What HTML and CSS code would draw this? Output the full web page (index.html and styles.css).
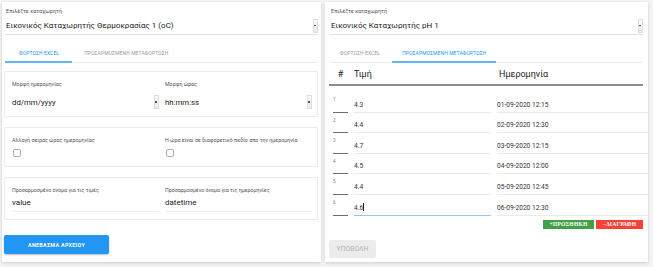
FILE: index.html
```html
<!DOCTYPE html>
<html lang="el">
<head>
    <meta charset="UTF-8">
    <meta name="viewport" content="width=device-width, initial-scale=1.0">
    <title>Μεταφόρτωση μετρήσεων</title>
    <link rel="stylesheet" href="styles.css">
</head>
<body>
<div class="page">

    <div class="card card-left">
        <div class="sel-label">Επιλέξτε καταχωρητή</div>
        <div class="select big">
            <span>Εικονικός Καταχωρητής Θερμοκρασίας 1 (oC)</span>
            <i class="arrow"></i>
        </div>

        <div class="tabs">
            <div class="tab active">ΦΟΡΤΩΣΗ EXCEL</div>
            <div class="tab">ΠΡΟΣΑΡΜΟΣΜΕΝΗ ΜΕΤΑΦΟΡΤΩΣΗ</div>
        </div>

        <div class="box box-formats">
            <div class="field">
                <div class="f-label">Μορφή ημερομηνίας</div>
                <div class="select small"><span>dd/mm/yyyy</span><i class="arrow"></i></div>
            </div>
            <div class="field">
                <div class="f-label">Μορφή ώρας</div>
                <div class="select small"><span>hh:mm:ss</span><i class="arrow"></i></div>
            </div>
        </div>

        <div class="box box-checks">
            <div class="field">
                <div class="f-label">Αλλαγή σειράς ώρας ημερομηνίας</div>
                <span class="check"></span>
            </div>
            <div class="field">
                <div class="f-label">Η ώρα είναι σε διαφορετικό πεδίο απο την ημερομηνία</div>
                <span class="check"></span>
            </div>
        </div>

        <div class="box box-names">
            <div class="field">
                <div class="f-label">Προσαρμοσμένο όνομα για τις τιμές</div>
                <div class="text-input">value</div>
            </div>
            <div class="field">
                <div class="f-label">Προσαρμοσμένο όνομα για τις ημερομηνίες</div>
                <div class="text-input">datetime</div>
            </div>
        </div>

        <button class="btn-upload">ΑΝΕΒΑΣΜΑ ΑΡΧΕΙΟΥ</button>
    </div>

    <div class="card card-right">
        <div class="sel-label">Επιλέξτε καταχωρητή</div>
        <div class="select big">
            <span>Εικονικός Καταχωρητής pH 1</span>
            <i class="arrow"></i>
        </div>

        <div class="tabs">
            <div class="tab">ΦΟΡΤΩΣΗ EXCEL</div>
            <div class="tab active">ΠΡΟΣΑΡΜΟΣΜΕΝΗ ΜΕΤΑΦΟΡΤΩΣΗ</div>
        </div>

        <div class="table">
            <div class="thead">
                <div class="c-num">#</div>
                <div class="c-val">Τιμή</div>
                <div class="c-date">Ημερομηνία</div>
            </div>
            <div class="row">
                <div class="c-num">1</div>
                <div class="c-val cell">4.3</div>
                <div class="c-date cell">01-09-2020 12:15</div>
            </div>
            <div class="row">
                <div class="c-num">2</div>
                <div class="c-val cell">4.4</div>
                <div class="c-date cell">02-09-2020 12:30</div>
            </div>
            <div class="row">
                <div class="c-num">3</div>
                <div class="c-val cell">4.7</div>
                <div class="c-date cell">03-09-2020 12:15</div>
            </div>
            <div class="row">
                <div class="c-num">4</div>
                <div class="c-val cell">4.5</div>
                <div class="c-date cell">04-09-2020 12:00</div>
            </div>
            <div class="row">
                <div class="c-num">5</div>
                <div class="c-val cell">4.4</div>
                <div class="c-date cell">05-09-2020 12:45</div>
            </div>
            <div class="row">
                <div class="c-num">6</div>
                <div class="c-val cell focused">4.6<span class="caret"></span></div>
                <div class="c-date cell">06-09-2020 12:30</div>
            </div>
        </div>

        <div class="row-actions">
            <button class="btn-add">+ΠΡΟΣΘΗΚΗ</button>
            <button class="btn-del">−ΔΙΑΓΡΑΦΗ</button>
        </div>

        <button class="btn-submit" disabled>ΥΠΟΒΟΛΗ</button>
    </div>

</div>
</body>
</html>
```

FILE: styles.css
```css
body {
    margin: 0;
    background: #f4f4f4;
    font-family: Roboto, "Noto Sans", sans-serif;
    color: #333;
}
.page {
    display: flex;
    gap: 4px;
    padding: 2px 5px 5px 2px;
    align-items: stretch;
}
.card {
    background: #fff;
    box-shadow: 0 1px 3px rgba(0,0,0,0.18);
    padding: 0 3px 8px 3px;
}
.card-left { width: 319px; box-sizing: border-box; }
.card-right { width: 323px; box-sizing: border-box; padding: 0 5px 0 5px; }

.sel-label {
    font-size: 5.5px;
    line-height: 8px;
    color: #555;
    padding: 5px 0 0 1px;
}
.select {
    display: flex;
    justify-content: space-between;
    align-items: center;
}
.select.big {
    height: 17px;
    margin-top: 2px;
    font-size: 8px;
    color: #222;
    border-bottom: 1px solid #e2e2e2;
    padding-left: 1px;
}
.select.small {
    height: 16px;
    font-size: 7.8px;
    color: #222;
    margin-top: 6px;
}
.arrow {
    width: 5px;
    height: 14px;
    box-sizing: border-box;
    border: 1px solid #dcdcdc;
    background: linear-gradient(#fcfcfc, #e8e8e8);
    position: relative;
}
.arrow::after {
    content: "";
    position: absolute;
    left: 0;
    top: 5px;
    width: 2px;
    height: 1.5px;
    background: #555;
}

.tabs {
    display: flex;
    margin-top: 10px;
    border-bottom: 1px solid #ececec;
}
.tab {
    font-size: 5px;
    color: #9a9a9a;
    height: 16px;
    line-height: 16px;
    padding: 0 12px;
    border-bottom: 2px solid transparent;
    margin-bottom: -1px;
    letter-spacing: 0.1px;
}
.tab.active {
    color: #2196f3;
    border-bottom-color: #64b5f6;
}
.card-left .tab:first-child { padding: 0 13px 0 14px; }
.card-right .tab:first-child { padding: 0 12px 0 10px; }
.card-right .tab.active { padding: 0 10px; }

.box {
    border: 1px solid #ebebeb;
    margin-left: -1px;
    margin-top: 8px;
    display: grid;
    grid-template-columns: 1fr 1fr;
    column-gap: 6px;
    padding: 8px 5px 6px 7px;
}
.box-checks { margin-top: 10px; padding-bottom: 9px; }
.box-names { margin-top: 10px; padding-bottom: 7px; }
.f-label {
    font-size: 5.3px;
    line-height: 8px;
    color: #555;
    white-space: nowrap;
}
.check {
    display: block;
    width: 8px;
    height: 8px;
    box-sizing: border-box;
    border: 1px solid #b0b0b0;
    border-radius: 2px;
    margin: 5px 0 0 1px;
}
.text-input {
    height: 17px;
    line-height: 18px;
    font-size: 8px;
    color: #222;
    border-bottom: 1px solid #eeeeee;
}

.btn-upload {
    display: block;
    margin-top: 15px;
    margin-left: -1px;
    width: 105px;
    height: 19px;
    border: none;
    border-radius: 2px;
    background: #2196f3;
    color: #fff;
    font-family: Roboto, sans-serif;
    font-weight: bold;
    font-size: 5.4px;
    letter-spacing: 0.3px;
    box-shadow: 0 1px 2px rgba(0,0,0,0.25);
}

.table { margin: 0 0 0 -1px; width: 314px; }
.thead {
    display: flex;
    height: 20px;
    align-items: center;
    font-size: 9px;
    color: #222;
    border-bottom: 2px solid #8c8c8c;
    padding-top: 1px;
    margin-bottom: 6px;
}
.thead .c-num { text-align: center; }
.thead .c-date { padding-left: 2px; }
.c-num { width: 15px; margin-left: 4px; flex: none; }
.c-val { width: 137px; margin-left: 6px; flex: none; }
.c-date { width: 151px; margin-left: 6px; flex: none; }
.row {
    display: flex;
    height: 20.6px;
    align-items: flex-end;
}
.row .c-num {
    align-self: stretch;
    font-size: 4.5px;
    color: #777;
    padding-top: 5px;
    box-sizing: border-box;
    border-bottom: 1px solid #6e6e6e;
    height: 20.6px;
}
.cell {
    height: 13px;
    line-height: 13px;
    font-size: 6.6px;
    color: #333;
    border-bottom: 1px solid #eaeaea;
}
.cell.focused { border-bottom-color: #90caf9; }
.caret {
    display: inline-block;
    width: 0.6px;
    height: 8px;
    background: #222;
    vertical-align: -1px;
}

.row-actions {
    display: flex;
    justify-content: flex-end;
    gap: 2px;
    margin-top: 4px;
    width: 313px;
}
.row-actions button {
    border: none;
    height: 9px;
    padding: 0;
    color: #fff;
    font-family: "Liberation Serif", serif;
    font-weight: bold;
    font-size: 5.6px;
    letter-spacing: 0.2px;
}
.btn-add { background: #43a047; width: 51px; }
.btn-del { background: #f44336; width: 47px; }

.btn-submit {
    display: block;
    margin-top: 11px;
    margin-left: -1px;
    width: 47px;
    height: 18px;
    border: none;
    border-radius: 2px;
    background: #ececec;
    color: #b3b3b3;
    font-family: Roboto, sans-serif;
    font-size: 6.8px;
}
```
